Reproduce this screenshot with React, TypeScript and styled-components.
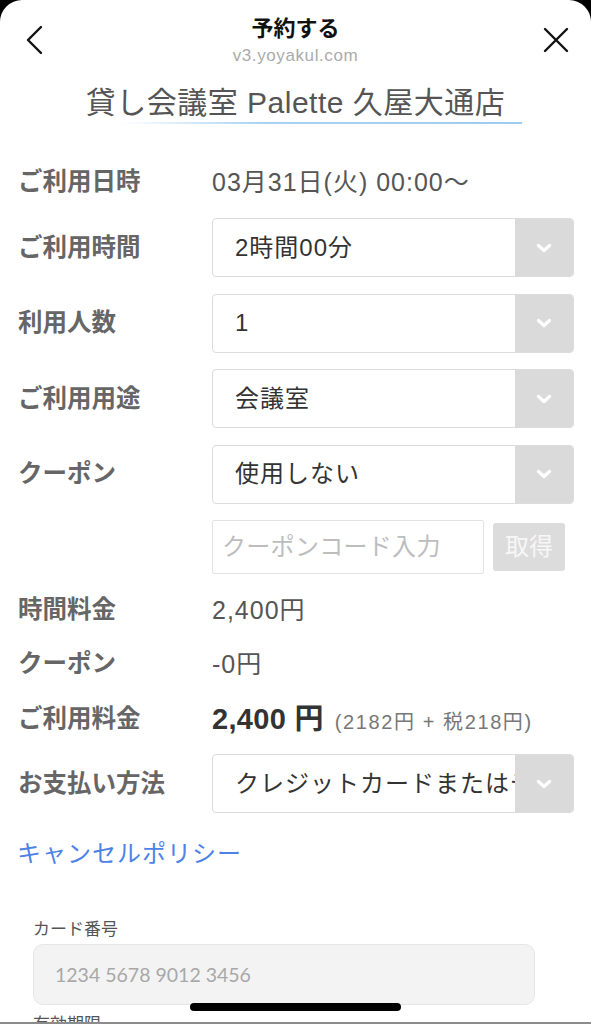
import React from "react";
import styled, { createGlobalStyle } from "styled-components";

const Global = createGlobalStyle`
  html, body { margin: 0; padding: 0; background: #000; }
  body { font-family: "Liberation Sans", "Noto Sans CJK JP", sans-serif; }
  * { box-sizing: border-box; }
`;

const Sheet = styled.div`
  position: relative;
  width: 591px;
  height: 1024px;
  overflow: hidden;
  background: #fff;
  border-radius: 22px 22px 0 0;
  border-bottom: 2px solid #8c8c8c;
`;

const Header = styled.header`
  display: grid;
  grid-template-columns: 70px 1fr 70px;
  align-items: center;
  height: 68px;
`;

const IconButton = styled.div`
  display: flex;
  align-items: center;
  justify-content: center;
  height: 68px;
  padding-top: 12px;
`;

const HeaderCenter = styled.div`
  display: flex;
  flex-direction: column;
  align-items: center;
  padding-top: 12px;
`;

const HeaderTitle = styled.div`
  font-size: 22px;
  font-weight: 700;
  color: #111;
  line-height: 30px;
`;

const HeaderUrl = styled.div`
  font-size: 17px;
  color: #ababab;
  line-height: 22px;
  margin-top: 1px;
  letter-spacing: 0.6px;
`;

const ShopTitle = styled.div`
  display: flex;
  flex-direction: column;
  align-items: center;
  padding-top: 16px;
`;

const ShopName = styled.h1`
  margin: 0;
  font-size: 30px;
  font-weight: 400;
  color: #555;
  line-height: 38px;
  letter-spacing: 0.5px;
`;

const Underline = styled.div`
  width: 402px;
  height: 1.5px;
  margin-left: 50px;
  background: linear-gradient(to right, rgba(170, 210, 240, 0), #a9d3f3 35%, #9ecbf0);
`;

const Form = styled.div`
  display: flex;
  flex-direction: column;
  gap: 16.5px;
  padding: 38px 17px 0 18px;
`;

const Row = styled.div<{ $first?: boolean }>`
  display: grid;
  grid-template-columns: 194px 1fr;
  align-items: center;
  min-height: ${(p) => (p.$first ? 40 : 38)}px;
  line-height: 38px;
`;

const Label = styled.div`
  font-size: 24.5px;
  font-weight: 700;
  color: #666;
`;

const Value = styled.div`
  font-size: 25px;
  color: #555;
  letter-spacing: 1px;
`;

const SelectBox = styled.div`
  display: flex;
  height: 59px;
  border: 1px solid #dcdcdc;
  border-radius: 4px;
  overflow: hidden;
  background: #fff;
`;

const SelectText = styled.div`
  flex: 1;
  display: flex;
  align-items: center;
  padding-left: 22px;
  font-size: 24px;
  color: #333;
  white-space: nowrap;
  overflow: hidden;
  letter-spacing: 1px;
`;

const SelectArrow = styled.div`
  width: 58px;
  display: flex;
  align-items: center;
  justify-content: center;
  background: #dadada;
`;

const CouponWrap = styled.div`
  display: flex;
  align-items: center;
  gap: 9px;
`;

const CouponInput = styled.div`
  width: 272px;
  height: 54px;
  border: 1px solid #e2e2e2;
  border-radius: 2px;
  display: flex;
  align-items: center;
  padding-left: 9px;
  font-size: 24px;
  color: #bdbdbd;
  white-space: nowrap;
  overflow: hidden;
  letter-spacing: 0.3px;
`;

const GetButton = styled.div`
  width: 72px;
  height: 48px;
  border-radius: 3px;
  background: #dcdcdc;
  color: #f7f7f7;
  font-size: 24px;
  display: flex;
  align-items: center;
  justify-content: center;
`;

const Total = styled.div`
  display: flex;
  align-items: baseline;
  gap: 11px;
  line-height: 38px;
  height: 38px;
`;

const TotalMain = styled.span`
  font-size: 29px;
  font-weight: 700;
  color: #333;
  letter-spacing: 0.3px;
`;

const TotalSub = styled.span`
  font-size: 20px;
  color: #777;
  letter-spacing: 1.6px;
`;

const CancelLink = styled.a`
  display: block;
  margin: 26px 0 0 17px;
  font-size: 24px;
  line-height: 30px;
  color: #4d82e6;
  text-decoration: none;
  letter-spacing: 1px;
`;

const CardSection = styled.div`
  display: flex;
  flex-direction: column;
  padding: 47px 0 0 33px;
`;

const CardLabel = styled.div`
  font-family: "Noto Sans CJK JP", sans-serif;
  font-size: 17px;
  color: #555;
  line-height: 24px;
  margin-bottom: 4px;
`;

const CardInput = styled.div`
  width: 502px;
  height: 61px;
  border: 1.5px solid #e6e6e6;
  border-radius: 10px;
  background: #f3f3f3;
  display: flex;
  align-items: center;
  padding-left: 21px;
  font-family: Lato, "Noto Sans", sans-serif;
  font-size: 19.5px;
  color: #a8a8a8;
`;

const NextLabel = styled(CardLabel)`
  margin-top: 6px;
`;

const HomeIndicator = styled.div`
  position: absolute;
  left: 190px;
  top: 1003px;
  width: 211px;
  height: 8px;
  border-radius: 4px;
  background: #000;
`;

const Chevron = () => (
  <svg width="16" height="10" viewBox="0 0 16 10">
    <path d="M2.5 2.5 L8 7.5 L13.5 2.5" fill="none" stroke="#fff" strokeWidth="3.4" strokeLinecap="round" strokeLinejoin="round" />
  </svg>
);

const Select = ({ text }: { text: string }) => (
  <SelectBox>
    <SelectText>{text}</SelectText>
    <SelectArrow>
      <Chevron />
    </SelectArrow>
  </SelectBox>
);

export default function App() {
  return (
    <>
      <Global />
      <Sheet>
        <Header>
          <IconButton>
            <svg width="20" height="30" viewBox="0 0 20 30">
              <path d="M16 2 L3 15 L16 28" fill="none" stroke="#111" strokeWidth="2.4" strokeLinecap="round" strokeLinejoin="round" />
            </svg>
          </IconButton>
          <HeaderCenter>
            <HeaderTitle>予約する</HeaderTitle>
            <HeaderUrl>v3.yoyakul.com</HeaderUrl>
          </HeaderCenter>
          <IconButton>
            <svg width="26" height="26" viewBox="0 0 26 26">
              <path d="M2 2 L24 24 M24 2 L2 24" fill="none" stroke="#111" strokeWidth="2.4" strokeLinecap="round" />
            </svg>
          </IconButton>
        </Header>

        <ShopTitle>
          <ShopName>貸し会議室 Palette 久屋大通店</ShopName>
          <Underline />
        </ShopTitle>

        <Form>
          <Row $first>
            <Label>ご利用日時</Label>
            <Value>03月31日(火) 00:00〜</Value>
          </Row>
          <Row>
            <Label>ご利用時間</Label>
            <Select text="2時間00分" />
          </Row>
          <Row>
            <Label>利用人数</Label>
            <Select text="1" />
          </Row>
          <Row>
            <Label>ご利用用途</Label>
            <Select text="会議室" />
          </Row>
          <Row>
            <Label>クーポン</Label>
            <Select text="使用しない" />
          </Row>
          <Row>
            <div />
            <CouponWrap>
              <CouponInput>クーポンコード入力</CouponInput>
              <GetButton>取得</GetButton>
            </CouponWrap>
          </Row>
          <Row>
            <Label>時間料金</Label>
            <Value>2,400円</Value>
          </Row>
          <Row>
            <Label>クーポン</Label>
            <Value>-0円</Value>
          </Row>
          <Row>
            <Label>ご利用料金</Label>
            <Total>
              <TotalMain>2,400 円</TotalMain>
              <TotalSub>(2182円 + 税218円)</TotalSub>
            </Total>
          </Row>
          <Row>
            <Label>お支払い方法</Label>
            <Select text="クレジットカードまたはデビットカード" />
          </Row>
        </Form>

        <CancelLink>キャンセルポリシー</CancelLink>

        <CardSection>
          <CardLabel>カード番号</CardLabel>
          <CardInput>1234 5678 9012 3456</CardInput>
          <NextLabel>有効期限</NextLabel>
        </CardSection>

        <HomeIndicator />
      </Sheet>
    </>
  );
}
